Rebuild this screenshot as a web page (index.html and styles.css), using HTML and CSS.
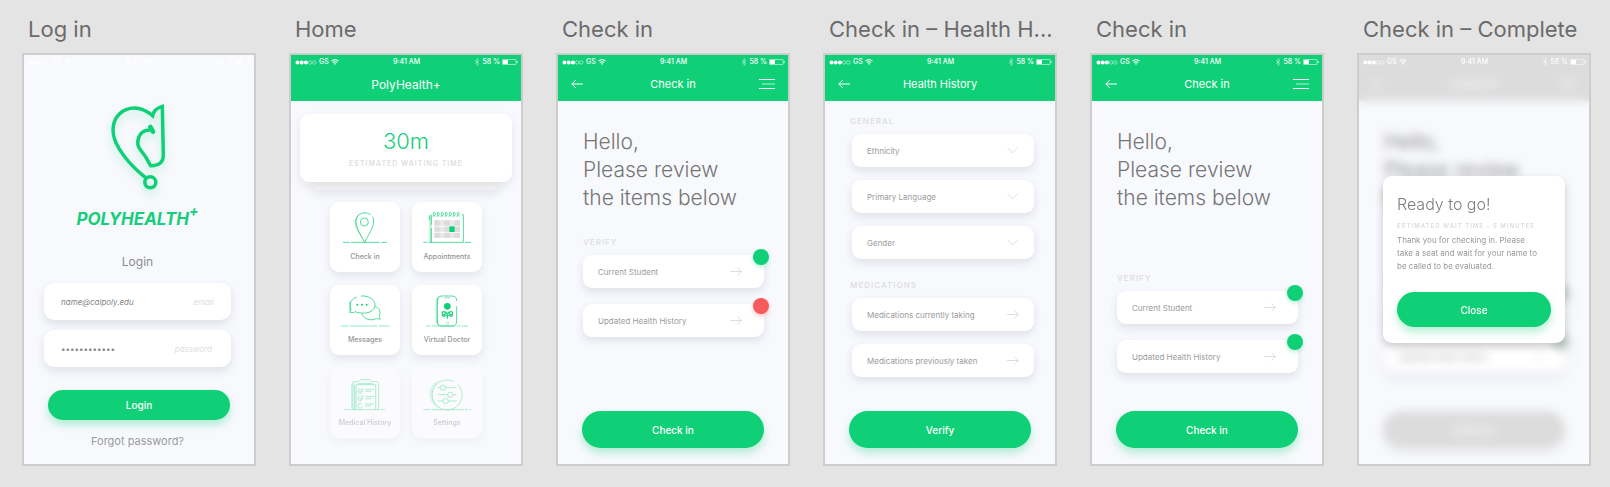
FILE: index.html
```html
<!DOCTYPE html>
<html lang="en">
<head>
<meta charset="utf-8">
<title>PolyHealth+ screens</title>
<link rel="stylesheet" href="styles.css">
</head>
<body>
<svg class="defs" aria-hidden="true">
  <symbol id="signal" viewBox="0 0 22 5">
    <g fill="currentColor"><circle cx="2.5" cy="2.5" r="2"/><circle cx="6.7" cy="2.5" r="2"/><circle cx="10.9" cy="2.5" r="2"/></g>
    <g fill="none" stroke="currentColor" stroke-width=".5"><circle cx="15.1" cy="2.5" r="1.7"/><circle cx="19.3" cy="2.5" r="1.7"/></g>
  </symbol>
  <symbol id="wifi" viewBox="0 0 8 6">
    <g fill="none" stroke="currentColor" stroke-width="1.1"><path d="M.5 2.2Q4-.9 7.5 2.2"/><path d="M1.9 3.7Q4 1.9 6.1 3.7"/></g>
    <path fill="currentColor" d="M2.9 4.6Q4 3.8 5.1 4.6L4 5.9z"/>
  </symbol>
  <symbol id="bluetooth" viewBox="0 0 6 8">
    <path fill="none" stroke="currentColor" stroke-opacity=".7" stroke-width=".6" d="M1 2.2l4 3.4L3 7.5v-7l2 1.9L1 5.8"/>
  </symbol>
  <symbol id="battery" viewBox="0 0 16 6">
    <rect x=".4" y=".4" width="13.7" height="5.2" rx=".8" fill="none" stroke="currentColor" stroke-width=".6"/>
    <rect x="1" y="1" width="5" height="4" fill="currentColor"/>
    <path fill="currentColor" d="M14.7 2h.8v2h-.8z"/>
  </symbol>
  <symbol id="back" viewBox="0 0 12 10">
    <path fill="none" stroke="currentColor" d="M12 5H.8M4.8 1l-4 4 4 4"/>
  </symbol>
  <symbol id="menu" viewBox="0 0 16 11">
    <path fill="none" stroke="currentColor" d="M0 .5h16M0 9.5h16"/><path fill="none" stroke="currentColor" stroke-opacity=".7" d="M3 5h13"/>
  </symbol>
  <symbol id="next" viewBox="0 0 12 9">
    <path fill="none" stroke="currentColor" stroke-width=".8" d="M0 4.5h11.3M7.5.7l3.9 3.8-3.9 3.8"/>
  </symbol>
  <symbol id="down" viewBox="0 0 11 7">
    <path fill="none" stroke="currentColor" stroke-width=".8" d="M.5.7l5 5.2 5-5.2"/>
  </symbol>
</svg>

<main class="board">
  <section class="artboard">
    <h2 class="name">Log in</h2>
    <div class="screen">
      <div class="status">
        <span class="status-left"><svg class="i-signal"><use href="#signal"/></svg>GS<svg class="i-wifi"><use href="#wifi"/></svg></span>
        <span>9:41 AM</span>
        <span class="status-right"><svg class="i-bt"><use href="#bluetooth"/></svg>58 %<svg class="i-battery"><use href="#battery"/></svg></span>
      </div>
      <form class="login">
        <svg class="logo" viewBox="328 305 180 270" aria-hidden="true">
          <g fill="none" stroke="currentColor" stroke-width="10.5">
            <circle cx="455" cy="546" r="16.5"/>
            <path d="M442 533C400 500 343 440 343 390C343 350 370 323 408 323C430 323 447 334 462 346C464 334 474 323 491 318L494 465C494 486 480 497 456 496C448 480 440 466 427 451C408 430 418 386 457 389"/>
            <path stroke-width="14" stroke-linecap="round" d="M455 380l8 14"/>
          </g>
        </svg>
        <p class="wordmark">POLYHEALTH<sup class="plus">+</sup></p>
        <h3 class="login-title">Login</h3>
        <div class="field">
          <input class="field-input" id="email" type="email" value="name@calpoly.edu">
          <label class="field-label" for="email">email</label>
        </div>
        <div class="field">
          <input class="field-input field-secret" id="password" type="password" value="abcdefghijkl">
          <label class="field-label field-label-secret" for="password">password</label>
        </div>
        <button class="button button-login" type="button">Login</button>
        <a class="forgot" href="#">Forgot password?</a>
      </form>
    </div>
  </section>

  <section class="artboard">
    <h2 class="name">Home</h2>
    <div class="screen">
      <header class="head">
        <div class="status">
          <span class="status-left"><svg class="i-signal"><use href="#signal"/></svg>GS<svg class="i-wifi"><use href="#wifi"/></svg></span>
          <span>9:41 AM</span>
          <span class="status-right"><svg class="i-bt"><use href="#bluetooth"/></svg>58 %<svg class="i-battery"><use href="#battery"/></svg></span>
        </div>
        <div class="nav nav-home"><h3 class="nav-title nav-title-home">PolyHealth+</h3></div>
      </header>
      <div class="home">
        <div class="wait">
          <p class="wait-time">30m</p>
          <p class="wait-label">ESTIMATED WAITING TIME</p>
        </div>
        <div class="wait-under"></div>
        <nav class="tiles">
          <a class="tile" href="#">
            <svg class="art" viewBox="0 0 210 135" aria-hidden="true">
              <path class="pale" d="M96 32C76 38 71 55 74 68C79 88 92 104 102 118L80 72C76 54 82 40 96 32z"/>
              <path d="M39 121h20M63 121h86M154 121h17M122 38C106 26 82 33 78 54C76 76 94 100 104 121C114 100 131 76 131 58C131 52 130 48 128 44"/>
              <circle cx="103" cy="60" r="12"/>
            </svg>
            <span>Check in</span>
          </a>
          <a class="tile" href="#">
            <svg class="art" viewBox="0 0 210 135" aria-hidden="true">
              <path class="pale" d="M52 40h7v81h-7z"/>
              <path d="M34 121h12M50 121h104M158 121h19M58 38v30M58 78v43M154 121V38h-4M52 40v14"/>
              <path d="M62 43c8 0 10-12 5-12s-4 8 1 12M74 43c8 0 10-12 5-12s-4 8 1 12M86 43c8 0 10-12 5-12s-4 8 1 12M98 43c8 0 10-12 5-12s-4 8 1 12M110 43c8 0 10-12 5-12s-4 8 1 12M122 43c8 0 10-12 5-12s-4 8 1 12M134 43c8 0 10-12 5-12s-4 8 1 12"/>
              <path class="cells" d="M67 55h77v16H67zM67 74h77v15H67zM67 92h77v16H67z"/>
              <path class="cells-dark" d="M67 55h16v16H67zM97 55h16v16H97zM128 55h16v16h-16zM67 74h16v15H67zM97 74h16v15H97zM128 74h16v15h-16zM67 92h16v16H67zM97 92h16v16H97zM128 92h16v16h-16z"/>
              <path class="solid" d="M112 73h16v17h-16z"/>
            </svg>
            <span>Appointments</span>
          </a>
          <a class="tile" href="#">
            <svg class="art" viewBox="0 0 210 135" aria-hidden="true">
              <path class="base" d="M32 123h24M60 123h82M147 123h30"/>
              <path d="M93 33C112 31 135 42 135 60C135 76 117 86 96 84C88 84 82 83 77 80C72 83 66 83 59 82C63 78 64 74 62 70C56 54 66 41 80 36"/>
              <path d="M60 50v30M96 86C100 99 114 106 128 104C133 104 136 102 139 100C143 102 148 103 151 102C149 98 148 95 149 91C152 76 146 68 136 65"/>
              <g class="solid"><circle cx="82" cy="59" r="3"/><circle cx="96" cy="59" r="3"/><circle cx="110" cy="59" r="3"/></g>
            </svg>
            <span>Messages</span>
          </a>
          <a class="tile" href="#">
            <svg class="art" viewBox="0 0 210 135" aria-hidden="true">
              <path class="pale" d="M84 33c-9 2-13 6-13 14v62c0 8 4 12 12 13l-5-9V46z"/>
              <path class="base" d="M42 123h14M60 123h70M134 123h12M150 123h18"/>
              <path d="M134 48c0-10-4-15-14-15H90c-10 0-14 5-14 15v60c0 10 4 15 14 15h30c10 0 14-5 14-15V64"/>
              <path class="pale" d="M98 36h16v5H98z"/>
              <circle class="solid" cx="106" cy="64" r="10"/>
              <g class="body"><circle cx="95" cy="85" r="5"/><circle cx="117" cy="85" r="5"/><path d="M100 80l6 7 6-7M90 91l7 4M122 91l-7 4M97 93l9-4 9 4M106 91v10"/></g>
              <circle class="thin" cx="106" cy="115" r="4"/>
            </svg>
            <span>Virtual Doctor</span>
          </a>
          <a class="tile tile-off" href="#">
            <svg class="art" viewBox="0 0 210 135" aria-hidden="true">
              <path class="pale" d="M65 44h10v81H65z"/>
              <path d="M43 125h20M67 125h80M152 125h13M66 125V50c0-6 3-9 8-9h12c2-4 5-5 9-6h22c4 1 6 2 8 6h14c5 0 7 3 7 9v75M78 125V50h59v75M84 47h44M74 50v75"/>
              <path d="M97 66a7 7 0 1 1-5-4M97 88a7 7 0 1 1-5-4M96 109a7 7 0 1 0 1 7M87 68l4 5 8-13M87 90l4 5 8-13M106 64h26M106 70h17M106 86h26M106 92h17M106 108h26M106 114h17"/>
            </svg>
            <span>Medical History</span>
          </a>
          <a class="tile tile-off" href="#">
            <svg class="art" viewBox="0 0 210 135" aria-hidden="true">
              <path class="pale" d="M88 36C40 46 40 112 88 122C52 102 52 56 88 36z"/>
              <path d="M34 125h22M60 125h96M160 125h8M172 125h6M126 41A45 45 0 1 0 137 49M77 59h8M101 59h33M77 80h30M123 80h11M77 99h16M109 99h25"/>
              <circle cx="93" cy="59" r="8"/><circle cx="115" cy="80" r="8"/><circle cx="101" cy="99" r="8"/>
            </svg>
            <span>Settings</span>
          </a>
        </nav>
      </div>
    </div>
  </section>

  <section class="artboard">
    <h2 class="name">Check in</h2>
    <div class="screen">
      <header class="head">
        <div class="status">
          <span class="status-left"><svg class="i-signal"><use href="#signal"/></svg>GS<svg class="i-wifi"><use href="#wifi"/></svg></span>
          <span>9:41 AM</span>
          <span class="status-right"><svg class="i-bt"><use href="#bluetooth"/></svg>58 %<svg class="i-battery"><use href="#battery"/></svg></span>
        </div>
        <div class="nav">
          <button class="icon-button" type="button" aria-label="Back"><svg class="i-back"><use href="#back"/></svg></button>
          <h3 class="nav-title">Check in</h3>
          <button class="icon-button icon-button-end" type="button" aria-label="Menu"><svg class="i-menu"><use href="#menu"/></svg></button>
        </div>
      </header>
      <div class="content">
        <p class="hello">Hello,<br>Please review<br>the items below</p>
        <h4 class="label label-verify">VERIFY</h4>
        <div class="rows">
          <a class="row" href="#">Current Student<svg class="i-next"><use href="#next"/></svg><i class="dot"></i></a>
          <a class="row" href="#">Updated Health History<svg class="i-next"><use href="#next"/></svg><i class="dot dot-red"></i></a>
        </div>
        <button class="button button-main" type="button">Check in</button>
      </div>
    </div>
  </section>

  <section class="artboard">
    <h2 class="name">Check in – Health H...</h2>
    <div class="screen">
      <header class="head">
        <div class="status">
          <span class="status-left"><svg class="i-signal"><use href="#signal"/></svg>GS<svg class="i-wifi"><use href="#wifi"/></svg></span>
          <span>9:41 AM</span>
          <span class="status-right"><svg class="i-bt"><use href="#bluetooth"/></svg>58 %<svg class="i-battery"><use href="#battery"/></svg></span>
        </div>
        <div class="nav">
          <button class="icon-button" type="button" aria-label="Back"><svg class="i-back"><use href="#back"/></svg></button>
          <h3 class="nav-title">Health History</h3>
        </div>
      </header>
      <div class="content content-history">
        <h4 class="label">GENERAL</h4>
        <div class="rows rows-history">
          <div class="row"><select class="pick" aria-label="Ethnicity"><option>Ethnicity</option></select><svg class="i-down"><use href="#down"/></svg></div>
          <div class="row"><select class="pick" aria-label="Primary Language"><option>Primary Language</option></select><svg class="i-down"><use href="#down"/></svg></div>
          <div class="row"><select class="pick" aria-label="Gender"><option>Gender</option></select><svg class="i-down"><use href="#down"/></svg></div>
        </div>
        <h4 class="label label-medications">MEDICATIONS</h4>
        <div class="rows rows-history">
          <a class="row" href="#">Medications currently taking<svg class="i-next"><use href="#next"/></svg></a>
          <a class="row" href="#">Medications previously taken<svg class="i-next"><use href="#next"/></svg></a>
        </div>
        <button class="button button-main" type="button">Verify</button>
      </div>
    </div>
  </section>

  <section class="artboard">
    <h2 class="name">Check in</h2>
    <div class="screen">
      <header class="head">
        <div class="status">
          <span class="status-left"><svg class="i-signal"><use href="#signal"/></svg>GS<svg class="i-wifi"><use href="#wifi"/></svg></span>
          <span>9:41 AM</span>
          <span class="status-right"><svg class="i-bt"><use href="#bluetooth"/></svg>58 %<svg class="i-battery"><use href="#battery"/></svg></span>
        </div>
        <div class="nav">
          <button class="icon-button" type="button" aria-label="Back"><svg class="i-back"><use href="#back"/></svg></button>
          <h3 class="nav-title">Check in</h3>
          <button class="icon-button icon-button-end" type="button" aria-label="Menu"><svg class="i-menu"><use href="#menu"/></svg></button>
        </div>
      </header>
      <div class="content">
        <p class="hello">Hello,<br>Please review<br>the items below</p>
        <h4 class="label label-verify-low">VERIFY</h4>
        <div class="rows">
          <a class="row" href="#">Current Student<svg class="i-next"><use href="#next"/></svg><i class="dot"></i></a>
          <a class="row" href="#">Updated Health History<svg class="i-next"><use href="#next"/></svg><i class="dot"></i></a>
        </div>
        <button class="button button-main" type="button">Check in</button>
      </div>
    </div>
  </section>

  <section class="artboard">
    <h2 class="name">Check in – Complete</h2>
    <div class="screen screen-complete">
      <header class="head">
        <div class="status">
          <span class="status-left"><svg class="i-signal"><use href="#signal"/></svg>GS<svg class="i-wifi"><use href="#wifi"/></svg></span>
          <span>9:41 AM</span>
          <span class="status-right"><svg class="i-bt"><use href="#bluetooth"/></svg>58 %<svg class="i-battery"><use href="#battery"/></svg></span>
        </div>
        <div class="nav">
          <button class="icon-button" type="button" aria-label="Back"><svg class="i-back"><use href="#back"/></svg></button>
          <h3 class="nav-title">Check in</h3>
          <button class="icon-button icon-button-end" type="button" aria-label="Menu"><svg class="i-menu"><use href="#menu"/></svg></button>
        </div>
      </header>
      <div class="content">
        <p class="hello">Hello,<br>Please review<br>the items below</p>
        <h4 class="label label-verify-low">VERIFY</h4>
        <div class="rows">
          <a class="row" href="#">Current Student<svg class="i-next"><use href="#next"/></svg><i class="dot"></i></a>
          <a class="row" href="#">Updated Health History<svg class="i-next"><use href="#next"/></svg><i class="dot"></i></a>
        </div>
        <button class="button button-main" type="button">Check in</button>
      </div>
      <div class="veil">
        <div class="dialog" role="dialog" aria-labelledby="ready">
          <h3 class="dialog-title" id="ready">Ready to go!</h3>
          <p class="dialog-label">ESTIMATED WAIT TIME – 5 MINUTES</p>
          <p class="dialog-text">Thank you for checking in. Please<br>take a seat and wait for your name to<br>be called to be evaluated.</p>
          <button class="button button-close" type="button">Close</button>
        </div>
      </div>
    </div>
  </section>
</main>
</body>
</html>
```
FILE: styles.css
```css
* { box-sizing: border-box; }

body {
  margin: 0;
  background: #e4e4e4;
  color: #8c8c8c;
  font-family: Inter, "Liberation Sans", sans-serif;
}

h2, h3, h4, p { margin: 0; font-weight: 400; }
a { color: inherit; text-decoration: none; }
button, input, select { font-family: inherit; border: 0; margin: 0; padding: 0; }
svg { display: block; flex: none; }
.defs { position: absolute; width: 0; height: 0; }

.board {
  display: grid;
  grid-template-columns: repeat(6, minmax(0, 1fr));
  gap: 33px;
  padding: 14px 19px 21px 22px;
}

.artboard { display: flex; flex-direction: column; }

.name {
  margin-bottom: 9px;
  padding-left: 6px;
  color: #6b6b6b;
  font-size: 22px;
  line-height: 30px;
  white-space: nowrap;
}

.screen {
  --accent: #0fd077;
  --glow: rgba(15, 208, 119, .3);
  --dot: #0fd077;
  position: relative;
  flex: 1;
  display: flex;
  flex-direction: column;
  border: 2px solid #cdcdcd;
  background: #f8f9fd;
  overflow: hidden;
}

/* Status bar and navigation */
.head { background: var(--accent); color: #fff; }

.status {
  display: grid;
  grid-template-columns: 1fr auto 1fr;
  align-items: center;
  padding: 0 3px 0 4px;
  color: #fff;
  font-size: 7px;
  font-weight: 500;
  line-height: 14px;
}

.status-left, .status-right { display: flex; align-items: center; gap: 2px; }
.status-right { justify-content: flex-end; }
.i-signal { width: 22px; height: 5px; }
.i-wifi { width: 8px; height: 6px; }
.i-bt { width: 6px; height: 8px; }
.i-battery { width: 16px; height: 6px; }

.nav {
  display: grid;
  grid-template-columns: 1fr auto 1fr;
  align-items: center;
  height: 32px;
  padding: 0 13px 2px;
}
.nav-home { grid-template-columns: 1fr; text-align: center; padding-bottom: 0; }
.nav-title { font-size: 11px; line-height: 16px; }
.nav-title-home { font-size: 12px; }

.icon-button {
  justify-self: start;
  background: none;
  color: #fff;
}
.icon-button-end { justify-self: end; }
.i-back { width: 12px; height: 10px; }
.i-menu { width: 16px; height: 11px; }

/* Buttons */
.button {
  border-radius: 20px;
  background: var(--accent);
  color: #fff;
  font-size: 10px;
  font-weight: 500;
  box-shadow: 0 5px 8px var(--glow);
}
.button-main { height: 37px; margin-top: auto; margin-left: -1px; }
.button-login { height: 30px; margin: 13px 1px 0 4px; font-size: 10px; }
.button-close { height: 35px; margin-top: 19px; font-size: 10px; }

/* Log in */
.login {
  display: flex;
  flex-direction: column;
  gap: 10px;
  padding: 33px 23px 16px 20px;
}
.logo {
  width: 60px;
  height: 90px;
  align-self: center;
  color: var(--accent);
  filter: drop-shadow(0 5px 4px rgba(15, 208, 119, .25));
}
.wordmark {
  margin-top: 6px;
  color: #16cd7b;
  font-size: 17px;
  font-style: italic;
  font-weight: 700;
  line-height: 22px;
  text-align: center;
  white-space: nowrap;
}
.plus { line-height: 0; vertical-align: 9px; }
.login-title {
  margin: 14px 0 3px;
  font-size: 12px;
  line-height: 16px;
  text-align: center;
}
.field {
  display: flex;
  align-items: center;
  height: 37px;
  padding: 0 17px;
  border-radius: 10px;
  background: #fff;
  box-shadow: 0 4px 8px rgba(60, 60, 90, .12);
}
.field-input {
  flex: 1;
  min-width: 0;
  background: none;
  color: #858585;
  font-size: 8px;
  font-style: italic;
}
.field-secret { font-style: normal; }
.field-label { color: #dedede; font-size: 8px; font-style: italic; }
.field-label-secret { margin-right: 2px; }
.forgot { margin-top: 4px; color: #9b9b9b; font-size: 11px; line-height: 14px; text-align: center; }

/* Home */
.home { padding: 13px 9px 26px; }
.wait {
  position: relative;
  padding: 12px 0 13px;
  border-radius: 9px;
  background: #fff;
  text-align: center;
  box-shadow: 0 4px 8px rgba(60, 60, 90, .1);
}
.wait-time { color: #16cd7b; font-size: 22px; font-weight: 300; line-height: 30px; }
.wait-label {
  margin-top: 3px;
  color: #e0e0e0;
  font-size: 7px;
  font-weight: 600;
  letter-spacing: 1px;
  line-height: 10px;
}
.wait-under {
  height: 8px;
  margin: 0 11px;
  border-radius: 0 0 9px 9px;
  background: #f4f4f4;
  box-shadow: 0 4px 8px rgba(60, 60, 90, .1);
}
.tiles {
  display: grid;
  grid-template-columns: 70px 70px;
  justify-content: center;
  gap: 13px 12px;
  margin-top: 12px;
}
.tile {
  padding-bottom: 10px;
  border-radius: 9px;
  background: #fff;
  color: #949494;
  font-size: 7px;
  font-weight: 500;
  line-height: 10px;
  text-align: center;
  white-space: nowrap;
  box-shadow: 0 4px 8px rgba(60, 60, 90, .1);
}
.tile-off { opacity: .45; }
.art {
  width: 100%;
  margin-bottom: 5px;
  fill: none;
  stroke: #2fd48a;
  stroke-width: 2.5;
}
.art .pale { fill: #b8f0d4; stroke: none; }
.art .base { stroke: #7ce3b4; }
.art .thin { stroke: #9becc8; }
.art .solid { fill: #0fd077; stroke: none; }
.art .body { stroke-width: 4; stroke: #22d384; }
.art .cells { fill: #e8e8e8; stroke: none; }
.art .cells-dark { fill: #dcdcdc; stroke: none; }

/* Check in and health history */
.content {
  flex: 1;
  display: flex;
  flex-direction: column;
  padding: 27px 24px 16px 25px;
}
.content-history { padding-top: 15px; }
.hello { color: #757575; font-size: 21px; font-weight: 300; line-height: 28px; white-space: nowrap; }
.label {
  margin-bottom: 8px;
  color: #dfdfe2;
  font-size: 8px;
  font-weight: 600;
  letter-spacing: 1px;
  line-height: 10px;
}
.label-verify { margin-top: 25px; }
.label-verify-low { margin-top: 61px; }
.label-medications { margin-top: 21px; }
.rows { display: flex; flex-direction: column; gap: 16px; }
.rows-history { gap: 13px; margin: 0 -3px 0 2px; }
.row {
  position: relative;
  display: flex;
  align-items: center;
  justify-content: space-between;
  height: 33px;
  padding: 0 22px 0 15px;
  border-radius: 9px;
  background: #fff;
  color: #9b9b9b;
  font-size: 8px;
  box-shadow: 0 4px 8px rgba(60, 60, 90, .12);
}
.rows-history .row { padding-right: 15px; }
.pick { flex: 1; appearance: none; background: none; color: #9b9b9b; font-size: 8px; }
.i-next { width: 12px; height: 9px; color: #d6d6d6; }
.i-down { width: 11px; height: 7px; color: #d6d6d6; margin-right: 1px; }
.dot {
  position: absolute;
  top: -6px;
  right: -5px;
  width: 16px;
  height: 16px;
  border-radius: 50%;
  background: var(--dot);
  box-shadow: 0 2px 4px var(--glow);
}
.dot-red { --dot: #f65a5b; --glow: rgba(246, 90, 91, .35); }

/* Completion dialog */
.screen-complete { --accent: #dcdcdc; --glow: rgba(0, 0, 0, .05); --dot: #c3d2ca; }
.screen-complete .status { position: relative; z-index: 2; }
.screen-complete .button-close { --accent: #0fd077; --glow: rgba(15, 208, 119, .3); }
.veil {
  position: absolute;
  inset: 0;
  padding: 121px 24px 0;
  backdrop-filter: blur(5px);
}
.dialog {
  display: flex;
  flex-direction: column;
  padding: 18px 14px 16px;
  border-radius: 9px;
  background: #fff;
  box-shadow: 0 4px 8px rgba(0, 0, 0, .2);
}
.dialog-title { font-size: 16px; font-weight: 300; line-height: 20px; color: #7d7d7d; }
.dialog-label {
  margin-top: 8px;
  color: #dcdcdc;
  font-size: 6px;
  font-weight: 600;
  letter-spacing: 1px;
  line-height: 8px;
  white-space: nowrap;
}
.dialog-text { margin-top: 4px; color: #979797; font-size: 8px; line-height: 13px; white-space: nowrap; }
```
